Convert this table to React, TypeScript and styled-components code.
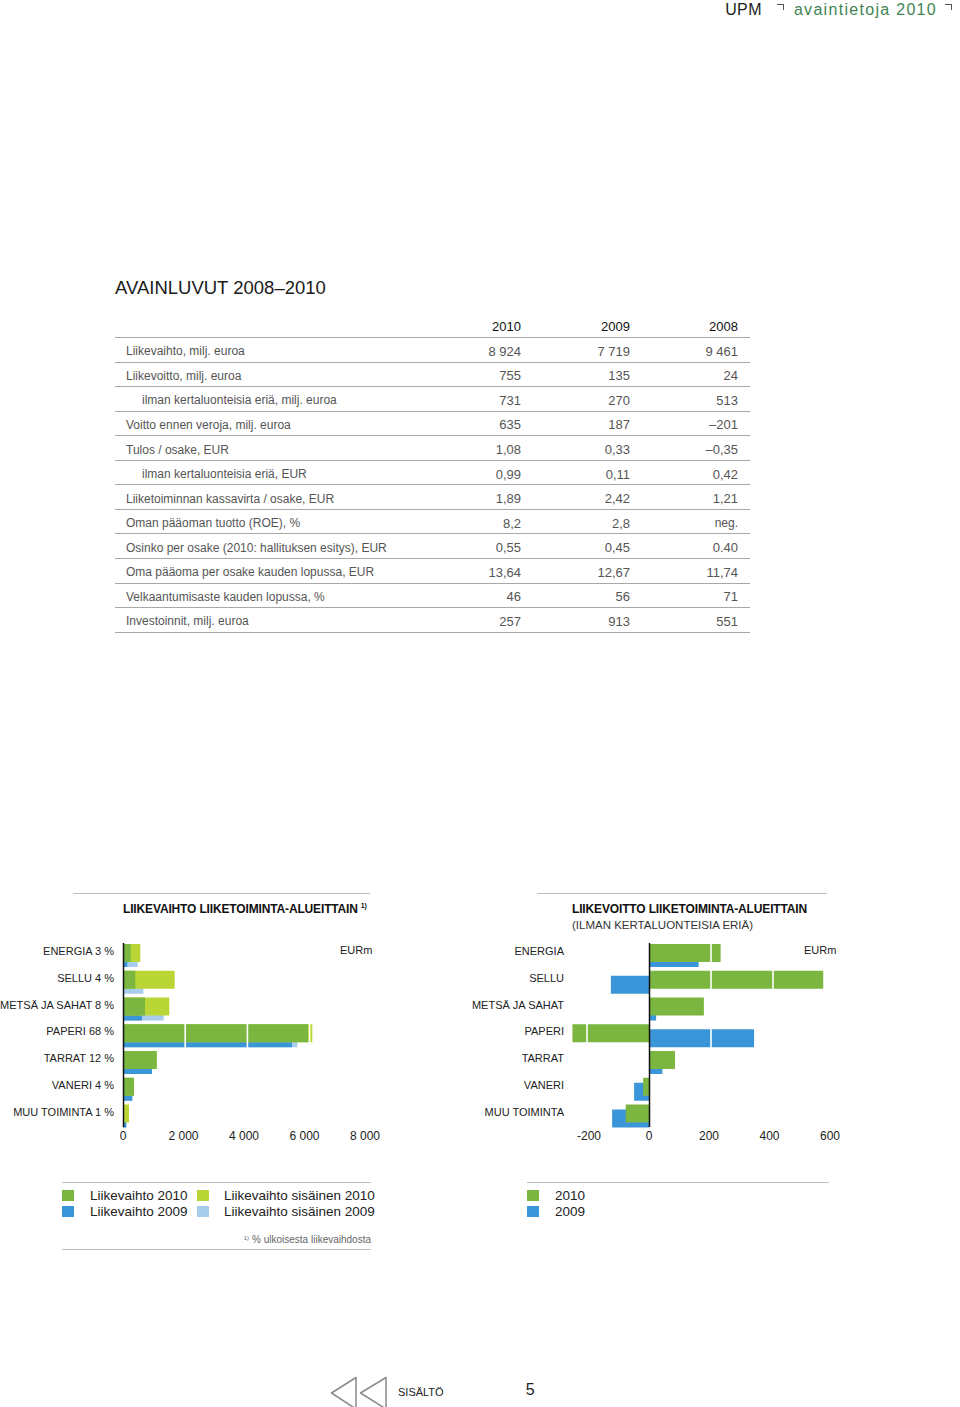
import React from "react";
import styled, { createGlobalStyle } from "styled-components";

const GlobalStyle = createGlobalStyle`
  html, body { margin: 0; padding: 0; background: #fff; overflow: hidden; }
  body { font-family: "Liberation Sans", Arial, sans-serif; color: #222; }
`;

const C = {
  green: "#7ab640",
  lime: "#b9d636",
  blue: "#3a96d8",
  sky: "#a8ccec",
  rule: "#bdbdbd",
  text: "#222",
  soft: "#555",
};

const Page = styled.div`
  width: 960px;
  height: 1407px;
  display: flex;
  flex-direction: column;
  overflow: hidden;
`;

/* ---------- top bar ---------- */
const TopBar = styled.header`
  display: flex;
  justify-content: flex-end;
  align-items: flex-start;
  height: 20px;
  padding: 1px 8px 0 0;
`;
const Brand = styled.span`
  font-size: 16px;
  line-height: 18px;
  color: #1d1d1d;
  letter-spacing: 0.4px;
`;
const Corner = styled.span<{ $gap: number }>`
  width: 6px;
  height: 5px;
  margin: 3px 0 0 ${(p) => p.$gap}px;
  border-top: 1px solid #555;
  border-right: 1px solid #555;
`;
const DocTitle = styled.span`
  margin-left: 10px;
  font-size: 16px;
  line-height: 18px;
  color: #3f8553;
  letter-spacing: 1.3px;
`;

/* ---------- key figures ---------- */
const KeySection = styled.section`
  margin: 256px 0 0 115px;
  width: 635px;
`;
const Heading = styled.h1`
  margin: 0 0 14.5px;
  font-size: 18.5px;
  font-weight: 400;
  line-height: 22px;
  color: #1a1a1a;
`;
const Row = styled.div`
  display: grid;
  grid-template-columns: 1fr 100px 109px 108px;
  align-items: center;
  height: 24.55px;
  box-sizing: border-box;
  padding: 3px 12px 0 0;
  border-bottom: 1px solid #a8a8a8;
`;
const Label = styled.span<{ $indent?: boolean }>`
  padding-left: ${(p) => (p.$indent ? 27 : 11)}px;
  font-size: 12px;
  color: ${C.soft};
  white-space: nowrap;
`;
const Value = styled.span<{ $small?: boolean }>`
  text-align: right;
  font-size: ${(p) => (p.$small ? 12 : 13)}px;
  color: ${C.soft};
`;
const Year = styled.span`
  text-align: right;
  font-size: 13px;
  color: #111;
`;

/* ---------- charts ---------- */
const ChartsRow = styled.div`
  display: flex;
  margin-top: 260px;
`;
const ChartCol = styled.div<{ $w: number; $ml?: number }>`
  width: ${(p) => p.$w}px;
  margin-left: ${(p) => p.$ml ?? 0}px;
  display: flex;
  flex-direction: column;
`;
const ChartHead = styled.div`
  height: 42px;
  display: flex;
  flex-direction: column;
`;
const Rule = styled.div<{ $ml: number; $w: number }>`
  margin-left: ${(p) => p.$ml}px;
  width: ${(p) => p.$w}px;
  border-top: 1.5px solid ${C.rule};
`;
const ChartTitle = styled.div<{ $ml: number }>`
  margin: 8.5px 0 0 ${(p) => p.$ml}px;
  font-size: 12px;
  font-weight: 700;
  line-height: 14px;
  letter-spacing: -0.15px;
  color: #111;
  white-space: nowrap;
`;
const Sup = styled.sup`
  font-size: 7px;
  margin-left: 3px;
  vertical-align: 5px;
  line-height: 0;
`;
const ChartSub = styled.div<{ $ml: number }>`
  margin: 1.5px 0 0 ${(p) => p.$ml}px;
  font-size: 11.5px;
  line-height: 14px;
  color: #333;
  white-space: nowrap;
`;
const Plot = styled.svg`
  display: block;
  font-family: "Liberation Sans", Arial, sans-serif;
`;

/* ---------- legends ---------- */
const LegendRow = styled.div`
  display: flex;
  margin-top: 35px;
`;
const LegendBlock = styled.div<{ $ml: number; $w: number }>`
  margin-left: ${(p) => p.$ml}px;
  width: ${(p) => p.$w}px;
  border-top: 1.5px solid ${C.rule};
  padding-top: 5px;
`;
const LegendGrid = styled.div<{ $cols: string }>`
  display: grid;
  grid-template-columns: ${(p) => p.$cols};
  align-items: center;
  font-size: 13.5px;
  line-height: 16px;
  color: ${C.text};
`;
const Swatch = styled.span<{ $c: string }>`
  display: block;
  width: 12px;
  height: 11px;
  background: ${(p) => p.$c};
`;
const LegendText = styled.span`
  white-space: nowrap;
`;
const Footnote = styled.div`
  margin-top: 14px;
  padding-bottom: 3px;
  border-bottom: 1.5px solid ${C.rule};
  text-align: right;
  font-size: 10px;
  line-height: 12px;
  color: #666;
`;
const FootSup = styled.sup`
  font-size: 6px;
  vertical-align: 3px;
  line-height: 0;
  margin-right: 3px;
`;

/* ---------- footer ---------- */
const Footer = styled.nav`
  margin-top: auto;
  height: 31px;
  display: flex;
  align-items: flex-start;
  padding-left: 330px;
  overflow: hidden;
`;
const NavArrows = styled.svg`
  display: block;
  flex: none;
`;
const NavLabel = styled.span`
  margin: 9.5px 0 0 10px;
  font-size: 11px;
  line-height: 13px;
  color: #222;
`;
const PageNo = styled.span`
  margin: 5px 0 0 82px;
  font-size: 16px;
  line-height: 18px;
  color: #222;
`;

/* ---------- data ---------- */
type KeyRow = { label: string; indent?: boolean; v: [string, string, string] };
const KEY_ROWS: KeyRow[] = [
  { label: "Liikevaihto, milj. euroa", v: ["8 924", "7 719", "9 461"] },
  { label: "Liikevoitto, milj. euroa", v: ["755", "135", "24"] },
  { label: "ilman kertaluonteisia eriä, milj. euroa", indent: true, v: ["731", "270", "513"] },
  { label: "Voitto ennen veroja, milj. euroa", v: ["635", "187", "–201"] },
  { label: "Tulos / osake, EUR", v: ["1,08", "0,33", "–0,35"] },
  { label: "ilman kertaluonteisia eriä, EUR", indent: true, v: ["0,99", "0,11", "0,42"] },
  { label: "Liiketoiminnan kassavirta / osake, EUR", v: ["1,89", "2,42", "1,21"] },
  { label: "Oman pääoman tuotto (ROE), %", v: ["8,2", "2,8", "neg."] },
  { label: "Osinko per osake (2010: hallituksen esitys), EUR", v: ["0,55", "0,45", "0.40"] },
  { label: "Oma pääoma per osake kauden lopussa, EUR", v: ["13,64", "12,67", "11,74"] },
  { label: "Velkaantumisaste kauden lopussa, %", v: ["46", "56", "71"] },
  { label: "Investoinnit, milj. euroa", v: ["257", "913", "551"] },
];

type SalesRow = { label: string; g: number; gt: number; b: number; bt: number };
const SALES: SalesRow[] = [
  { label: "ENERGIA 3 %", g: 248, gt: 556, b: 138, bt: 473 },
  { label: "SELLU 4 %", g: 395, gt: 1662, b: 32, bt: 653 },
  { label: "METSÄ JA SAHAT 8 %", g: 707, gt: 1489, b: 611, bt: 1309 },
  { label: "PAPERI 68 %", g: 5949, gt: 6087, b: 5434, bt: 5605 },
  { label: "TARRAT 12 %", g: 1084, gt: 1084, b: 932, bt: 932 },
  { label: "VANERI 4 %", g: 354, gt: 354, b: 299, bt: 299 },
  { label: "MUU TOIMINTA 1 %", g: 16, gt: 193, b: 106, bt: 106 },
];

type ProfitRow = { label: string; g: number; b: number };
const PROFIT: ProfitRow[] = [
  { label: "ENERGIA", g: 231, b: 160 },
  { label: "SELLU", g: 562, b: -123 },
  { label: "METSÄ JA SAHAT", g: 177, b: 23 },
  { label: "PAPERI", g: -247, b: 339 },
  { label: "TARRAT", g: 84, b: 43 },
  { label: "VANERI", g: -19, b: -48 },
  { label: "MUU TOIMINTA", g: -75, b: -119 },
];

const rowTop = (i: number) => 9 + i * 26.75;
const BAR_H = 18;
const BLUE_DROP = 5;

function SalesChart() {
  const x0 = 123;
  const s = 0.0311;
  const ticks = ["0", "2 000", "4 000", "6 000", "8 000"];
  return (
    <Plot width={400} height={212} viewBox="0 0 400 212">
      {SALES.map((r, i) => {
        const t = rowTop(i);
        return (
          <g key={r.label}>
            <rect x={x0} y={t + BLUE_DROP} width={r.bt * s} height={BAR_H} fill={C.sky} />
            <rect x={x0} y={t + BLUE_DROP} width={r.b * s} height={BAR_H} fill={C.blue} />
            <rect x={x0} y={t} width={r.gt * s} height={BAR_H} fill={C.lime} />
            <rect x={x0} y={t} width={r.g * s} height={BAR_H} fill={C.green} />
            <text x={114} y={t + 11} fontSize={11} textAnchor="end" fill={C.text}>
              {r.label}
            </text>
          </g>
        );
      })}
      {[1, 2, 3].map((k) => (
        <line key={k} x1={x0 + 62.2 * k} x2={x0 + 62.2 * k} y1={0} y2={195} stroke="#fff" strokeWidth={1.6} />
      ))}
      <line x1={x0 + 0.5} x2={x0 + 0.5} y1={8} y2={192} stroke="#111" strokeWidth={1.5} />
      {ticks.map((t, i) => (
        <text key={t} x={x0 + i * 60.5} y={205} fontSize={12} textAnchor="middle" fill={C.text}>
          {t}
        </text>
      ))}
      <text x={340} y={19} fontSize={11} fill={C.text}>
        EURm
      </text>
    </Plot>
  );
}

function ProfitChart() {
  const x0 = 189;
  const s = 0.31;
  const ticks = [
    { t: "-200", x: 129 },
    { t: "0", x: 189 },
    { t: "200", x: 249 },
    { t: "400", x: 309.5 },
    { t: "600", x: 370 },
  ];
  const bar = (v: number) => ({ x: v >= 0 ? x0 : x0 + v * s, w: Math.abs(v) * s });
  return (
    <Plot width={400} height={212} viewBox="0 0 400 212">
      {PROFIT.map((r, i) => {
        const t = rowTop(i);
        const b = bar(r.b);
        const g = bar(r.g);
        return (
          <g key={r.label}>
            <rect x={b.x} y={t + BLUE_DROP} width={b.w} height={BAR_H} fill={C.blue} />
            <rect x={g.x} y={t} width={g.w} height={BAR_H} fill={C.green} />
            <text x={104} y={t + 11} fontSize={11} textAnchor="end" fill={C.text}>
              {r.label}
            </text>
          </g>
        );
      })}
      {[-1, 1, 2, 3].map((k) => (
        <line key={k} x1={x0 + 62 * k} x2={x0 + 62 * k} y1={0} y2={195} stroke="#fff" strokeWidth={1.6} />
      ))}
      <line x1={x0 + 0.5} x2={x0 + 0.5} y1={8} y2={192} stroke="#111" strokeWidth={1.5} />
      {ticks.map((t) => (
        <text key={t.t} x={t.x} y={205} fontSize={12} textAnchor="middle" fill={C.text}>
          {t.t}
        </text>
      ))}
      <text x={344} y={19} fontSize={11} fill={C.text}>
        EURm
      </text>
    </Plot>
  );
}

export default function App() {
  return (
    <>
      <GlobalStyle />
      <Page>
        <TopBar>
          <Brand>UPM</Brand>
          <Corner $gap={15} />
          <DocTitle>avaintietoja 2010</DocTitle>
          <Corner $gap={8} />
        </TopBar>

        <KeySection>
          <Heading>AVAINLUVUT 2008–2010</Heading>
          <Row>
            <span />
            <Year>2010</Year>
            <Year>2009</Year>
            <Year>2008</Year>
          </Row>
          {KEY_ROWS.map((r) => (
            <Row key={r.label + r.v[0]}>
              <Label $indent={r.indent}>{r.label}</Label>
              {r.v.map((v, i) => (
                <Value key={i} $small={v === "neg."}>
                  {v}
                </Value>
              ))}
            </Row>
          ))}
        </KeySection>

        <ChartsRow>
          <ChartCol $w={400}>
            <ChartHead>
              <Rule $ml={73} $w={297} />
              <ChartTitle $ml={123}>
                LIIKEVAIHTO LIIKETOIMINTA-ALUEITTAIN<Sup>1)</Sup>
              </ChartTitle>
            </ChartHead>
            <SalesChart />
          </ChartCol>
          <ChartCol $w={400} $ml={60}>
            <ChartHead>
              <Rule $ml={77} $w={290} />
              <ChartTitle $ml={112}>LIIKEVOITTO LIIKETOIMINTA-ALUEITTAIN</ChartTitle>
              <ChartSub $ml={112}>(ILMAN KERTALUONTEISIA ERIÄ)</ChartSub>
            </ChartHead>
            <ProfitChart />
          </ChartCol>
        </ChartsRow>

        <LegendRow>
          <LegendBlock $ml={62} $w={309}>
            <LegendGrid $cols="28px 107px 27px auto">
              <Swatch $c={C.green} />
              <LegendText>Liikevaihto 2010</LegendText>
              <Swatch $c={C.lime} />
              <LegendText>Liikevaihto sisäinen 2010</LegendText>
              <Swatch $c={C.blue} />
              <LegendText>Liikevaihto 2009</LegendText>
              <Swatch $c={C.sky} />
              <LegendText>Liikevaihto sisäinen 2009</LegendText>
            </LegendGrid>
            <Footnote>
              <FootSup>1)</FootSup>% ulkoisesta liikevaihdosta
            </Footnote>
          </LegendBlock>
          <LegendBlock $ml={156} $w={302}>
            <LegendGrid $cols="28px auto">
              <Swatch $c={C.green} />
              <LegendText>2010</LegendText>
              <Swatch $c={C.blue} />
              <LegendText>2009</LegendText>
            </LegendGrid>
          </LegendBlock>
        </LegendRow>

        <Footer>
          <NavArrows width={58} height={34} viewBox="0 0 58 34">
            <path d="M1.5 17 L26 1.5 L26 33 Z" fill="none" stroke="#8a8a8a" strokeWidth={1.5} strokeLinejoin="round" />
            <path d="M30.5 17 L56 1.5 L56 33 Z" fill="none" stroke="#8a8a8a" strokeWidth={1.5} strokeLinejoin="round" />
          </NavArrows>
          <NavLabel>SISÄLTÖ</NavLabel>
          <PageNo>5</PageNo>
        </Footer>
      </Page>
    </>
  );
}
